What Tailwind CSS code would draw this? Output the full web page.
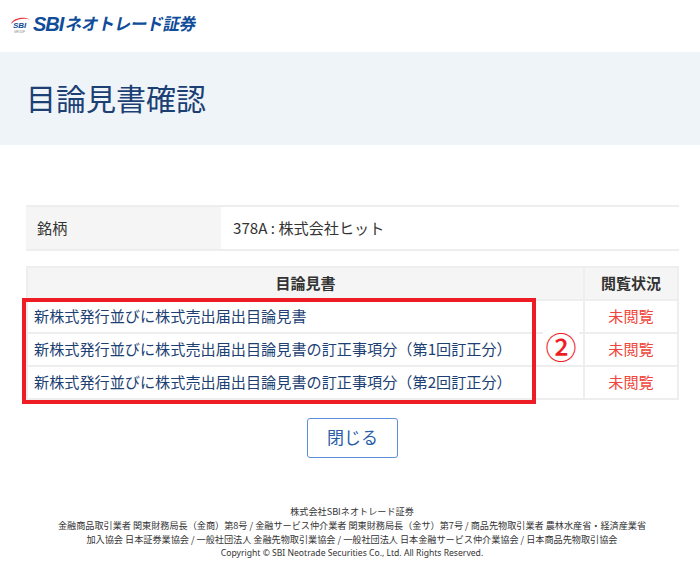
<!DOCTYPE html>
<html lang="ja"><head><meta charset="utf-8"><script src="https://cdn.jsdelivr.net/npm/@tailwindcss/browser@4"></script></head>
<body class="bg-white font-['Noto_Sans_CJK_JP','Noto_Sans',sans-serif] text-[#333]">
<div class="relative w-[700px] h-[562px] overflow-hidden">
<header class="h-[52px] flex items-center pl-[11px] pb-[5px]">
  <svg width="19" height="18" viewBox="0 0 19 18" class="mr-[3px] mt-[2px]">
    <path d="M0 8 C2 2 12 0 19 3.5 C12 2 5 3 0 8Z" fill="#e8343c"/>
    <text x="2" y="12" font-family="Liberation Sans" font-weight="700" font-style="italic" font-size="8" fill="#0f4c9a">SBI</text>
    <text x="3" y="16.5" font-family="Liberation Sans" font-size="3" fill="#888">GROUP</text>
  </svg>
  <span class="font-['Liberation_Sans'] font-bold italic text-[20px] leading-none text-[#0f4c9a] tracking-[-1px]">SBI</span>
  <span class="ml-[3px] font-bold text-[16.7px] leading-none text-[#0f4c9a] -skew-x-12 tracking-[-0.4px]">ネオトレード証券</span>
</header>
<div class="h-[93px] bg-[#eff4f9] flex items-center pl-[26px]">
  <h1 class="text-[30px] leading-none font-normal text-[#1c3f74] mb-[4px]">目論見書確認</h1>
</div>
<main class="mx-[26px] w-[653px] pt-[60px]">
  <div class="flex h-[46px] border-y-2 border-[#eeeeee] text-[15.15px]">
    <div class="w-[195px] bg-[#f5f5f5] flex items-center pl-[11px] pb-[2px]">銘柄</div>
    <div class="flex-1 flex items-center pl-[12px] pb-[1px]">378A : 株式会社ヒット</div>
  </div>
  <table class="mt-[15px] w-[653px] table-fixed border-collapse text-[15.15px] border-2 border-[#eeeeee]">
    <thead>
      <tr class="h-[33px] bg-[#f5f5f5]">
        <th class="border-2 border-[#eeeeee] font-bold text-[15px] p-0">目論見書</th>
        <th class="w-[94px] border-2 border-[#eeeeee] font-bold text-[15px] p-0">閲覧状況</th>
      </tr>
    </thead>
    <tbody>
      <tr class="h-[33px]">
        <td class="border-2 border-[#eeeeee] pl-[6px] p-0 pb-[2px] text-[#1c3f74]">新株式発行並びに株式売出届出目論見書</td>
        <td class="border-2 border-[#eeeeee] text-center text-[#f0453a] p-0 pb-[2px]">未閲覧</td>
      </tr>
      <tr class="h-[33px]">
        <td class="border-2 border-[#eeeeee] pl-[6px] p-0 pb-[2px] text-[#1c3f74] whitespace-nowrap">新株式発行並びに株式売出届出目論見書の訂正事項分（第1回訂正分）</td>
        <td class="border-2 border-[#eeeeee] text-center text-[#f0453a] p-0 pb-[2px]">未閲覧</td>
      </tr>
      <tr class="h-[33px]">
        <td class="border-2 border-[#eeeeee] pl-[6px] p-0 pb-[2px] text-[#1c3f74] whitespace-nowrap">新株式発行並びに株式売出届出目論見書の訂正事項分（第2回訂正分）</td>
        <td class="border-2 border-[#eeeeee] text-center text-[#f0453a] p-0 pb-[2px]">未閲覧</td>
      </tr>
    </tbody>
  </table>
  <div class="flex justify-center mt-[18px]">
    <button class="w-[91px] h-[40px] border border-[#5b8fd8] rounded-[3px] text-[17px] text-[#2a5ea8] bg-white pb-[2px]">閉じる</button>
  </div>
</main>
<footer class="absolute left-[4px] right-0 top-[504px] text-center text-[9.15px] leading-[14px] text-[#333]">
  <p>株式会社SBIネオトレード証券</p>
  <p>金融商品取引業者 関東財務局長（金商）第8号 / 金融サービス仲介業者 関東財務局長（金サ）第7号 / 商品先物取引業者 農林水産省・経済産業省</p>
  <p>加入協会 日本証券業協会 / 一般社団法人 金融先物取引業協会 / 一般社団法人 日本金融サービス仲介業協会 / 日本商品先物取引協会</p>
  <p class="font-['Noto_Sans'] text-[8.6px]">Copyright © SBI Neotrade Securities Co., Ltd. All Rights Reserved.</p>
</footer>
<div class="absolute left-[22px] top-[298px] w-[514px] h-[106px] border-[4px] border-[#ee1c25]"></div>
<div class="absolute left-[543px] top-[330px] w-[36px] h-[30px] bg-white flex items-center justify-center text-[#ee1c25] font-medium text-[31px] leading-none">②</div>
</div>
</body></html>
